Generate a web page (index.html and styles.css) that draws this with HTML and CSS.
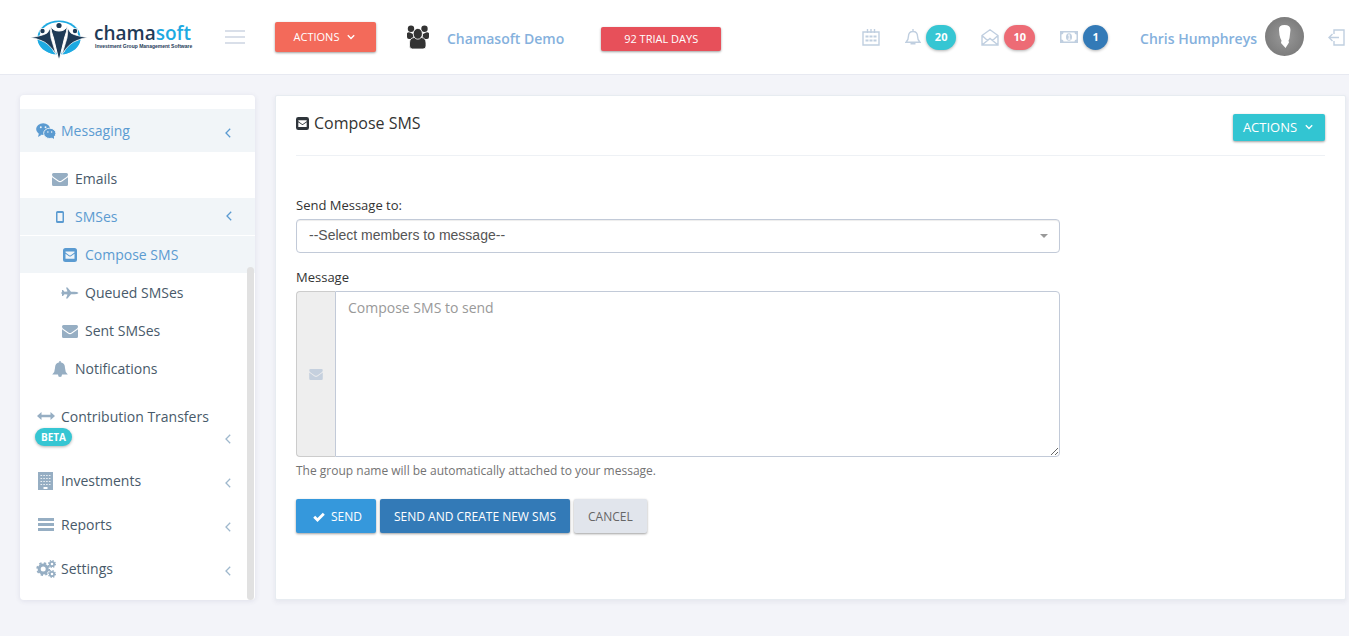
FILE: index.html
```html
<!DOCTYPE html>
<html lang="en">
<head>
<meta charset="utf-8">
<title>Compose SMS</title>
<link rel="stylesheet" href="styles.css">
</head>
<body>
<svg class="defs" aria-hidden="true">
  <symbol id="envelope" viewBox="0 0 16 13"><path d="M1.5 0h13Q16 0 16 1.5 16 3 14.5 4L9.500 7.600Q8 8.600 6.500 7.600L1.500 4Q0 3 0 1.500 0 0 1.500 0z"/><path d="M0 4.200 6 8.600Q8 9.900 10 8.600L16 4.200V11.500Q16 13 14.500 13h-13Q0 13 0 11.500z"/></symbol>
  <symbol id="envelope-square" viewBox="0 0 14 14"><path fill-rule="evenodd" d="M2.500 0h9Q14 0 14 2.500v9q0 2.500-2.500 2.500h-9Q0 14 0 11.500v-9Q0 0 2.500 0zM2.500 3.500v1L6.200 7.300q.8.500 1.600 0L11.500 4.500v-1zM2.500 5.700v5h9v-5L8 8.200q-1 .6-2 0z"/></symbol>
  <symbol id="left" viewBox="0 0 6 10"><path d="M5.200.8 1 5l4.200 4.200" fill="none" stroke="currentColor" stroke-width="1.300"/></symbol>
  <symbol id="down" viewBox="0 0 8 6"><path d="M.8 1.200 4 4.400 7.200 1.200" fill="none" stroke="currentColor" stroke-width="1.400"/></symbol>
  <radialGradient id="disc"><stop offset="0" stop-color="#999"/><stop offset="1" stop-color="#7d7d7d"/></radialGradient>
</svg>

<header class="topbar">
  <a class="logo" href="#" aria-label="Chamasoft home">
    <svg class="logo-mark" viewBox="0 0 58 42" aria-hidden="true">
      <ellipse cx="29" cy="19.500" rx="21.500" ry="17" fill="#1eaae2"/>
      <ellipse cx="29" cy="19.500" rx="19.500" ry="15.300" fill="#fff"/>
      <path d="M7.500 22q2 11 17 14.500L20 25zM50.500 22q-2 11-17 14.500L38 25z" fill="#1eaae2"/>
      <path d="M0 19.500Q9 18.500 14 16.500 18 16 20.500 9.500 20 15 21 20L26 36.500Q19 25 11 22.500 6 20 0 19.500z" fill="#1f3b57" stroke="#fff" stroke-width=".7"/>
      <path d="M58 19.500Q49 18.500 44 16.500 40 16 37.500 9.500 38 15 37 20L32 36.500Q39 25 47 22.500 52 20 58 19.500z" fill="#1f3b57" stroke="#fff" stroke-width=".7"/>
      <path d="M20.500 7Q22 13 29 13T37.500 7Q37 14 34.500 20L29.500 41h-1L23.500 20Q21 14 20.500 7z" fill="#1f3b57" stroke="#fff" stroke-width="1"/>
      <circle cx="29" cy="7.500" r="3.600" fill="#fff"/>
      <circle cx="29" cy="7.500" r="2.600" fill="#1f3b57"/><circle cx="12.500" cy="13" r="3" fill="#fff"/><circle cx="45" cy="13" r="3" fill="#fff"/><circle cx="12.500" cy="13" r="2.200" fill="#1f3b57"/><circle cx="45" cy="13" r="2.200" fill="#1f3b57"/>
    </svg>
    <span class="logo-words"><span class="logo-name">chama<span>soft</span></span><span class="logo-tag">Investment Group Management Software</span></span>
  </a>
  <button class="toggler" type="button" aria-label="Toggle menu"><i></i><i></i><i></i></button>
  <button class="btn btn-coral" type="button">ACTIONS <svg class="caret"><use href="#down"/></svg></button>
  <a class="group" href="#">
    <svg viewBox="0 0 24 24" class="group-icon" aria-hidden="true"><g fill="#333"><circle cx="5" cy="3.800" r="3.200"/><circle cx="18.500" cy="3.800" r="3.200"/><path d="M1 8.200Q2 7 4 7.500L7 9q0 4 2 5H3Q1 14 1 12zM23 8.200Q22 7 20 7.500L17 9q0 4-2 5h6q2 0 2-2z"/><path d="M3.500 21v-3q0-5 4.500-5.500h7.500q4.500.5 4.500 5.500v3q0 3-3 3H6.500q-3 0-3-3z" stroke="#fff" stroke-width=".8"/><ellipse cx="11.800" cy="8.800" rx="4.600" ry="5.400" stroke="#fff" stroke-width=".8"/></g></svg>
    <span>Chamasoft Demo</span>
  </a>
  <a class="btn btn-red" href="#">92 TRIAL DAYS</a>
  <nav class="top-nav" aria-label="Account">
    <a href="#" aria-label="Calendar"><svg class="line" width="18" height="17" viewBox="0 0 18 17"><path d="M1 3h16v13H1zM5.500 0v4M9 0v4M12.500 0v4"/><path d="M3.500 7.500h11M3.500 11.500h11" stroke-width="2" stroke-dasharray="3 1"/></svg></a>
    <a href="#"><svg class="line" width="16" height="16" viewBox="0 0 16 16"><path d="M1 13.300h14Q12.500 11 12.500 7 12.500 2.500 8 2.500T3.500 7Q3.500 11 1 13.300zM8 0v2.500"/><path d="M5.500 14.500h5" stroke-width="2"/></svg><span class="count teal">20</span></a>
    <a href="#"><svg class="line" width="18" height="17" viewBox="0 0 18 17"><path d="M1 6.500 9 .8l8 5.700V16H1zM1 6.500l5.500 5M17 6.500l-5.500 5M1 16l8-6.500L17 16"/></svg><span class="count pink">10</span></a>
    <a href="#"><svg width="18" height="12" viewBox="0 0 18 12" fill="currentColor"><path fill-rule="evenodd" d="M0 0h18v12H0zM3.500 1.500Q3.500 3.500 1.500 3.500v5q2 0 2 2h11q0-2 2-2v-5q-2 0-2-2z"/><ellipse cx="9" cy="6" rx="3" ry="3.800"/><path d="M8 4.500 9.200 3.500v4.500M7.800 8.200h2.700" fill="none" stroke="#fff"/></svg><span class="count blue">1</span></a>
  </nav>
  <a class="user" href="#"><span>Chris Humphreys</span>
    <svg class="avatar" viewBox="0 0 39 39" aria-hidden="true"><circle cx="19.500" cy="19.500" r="19.500" fill="url(#disc)"/><path d="M14 13Q13.500 8 19.500 8T25.500 13L24.500 21q-.5 2-1 2.500l.5 2L20.500 31 16 26 16.500 23.500Q15 21 14.500 18z" fill="#fff"/></svg>
  </a>
  <a class="logout" href="#" aria-label="Log out"><svg class="line" width="17" height="17" viewBox="0 0 17 17"><path d="M6 5V1h10v15H6v-4M1 8.500h10M4.500 5 1 8.500 4.500 12"/></svg></a>
</header>

<div class="page">
  <aside class="sidebar">
    <ul class="menu">
      <li>
        <a class="item active" href="#"><svg class="icon" viewBox="0 0 21 17"><ellipse cx="7.500" cy="6.500" rx="7.500" ry="6.300"/><path d="M3 11l-1 4 4-2.500z"/><ellipse cx="14.500" cy="11" rx="6.500" ry="5.500" stroke="#f1f5f8"/><path d="M16 15l3 2v-3z"/><g fill="#f1f5f8"><circle cx="5" cy="4.500" r="1"/><circle cx="10" cy="4.500" r="1"/><circle cx="12.500" cy="9.500" r=".8"/><circle cx="16.500" cy="9.500" r=".8"/></g></svg>Messaging<svg class="chev"><use href="#left"/></svg></a>
        <ul class="sub">
          <li><a class="item" href="#"><svg class="icon"><use href="#envelope" x="2" y="2" width="16" height="13"/></svg>Emails</a></li>
          <li><a class="item active" href="#"><svg class="icon" viewBox="0 0 20 16"><path fill-rule="evenodd" d="M7.500 2h5Q14 2 14 3.500v9q0 1.500-1.500 1.500h-5Q6 14 6 12.500v-9Q6 2 7.500 2zm0 2v8h5V4z"/></svg>SMSes<svg class="chev"><use href="#left"/></svg></a>
            <ul class="sub-deep">
              <li><a class="item active" href="#"><svg class="icon"><use href="#envelope-square" x="3" y="1" width="14" height="14"/></svg>Compose SMS</a></li>
              <li><a class="item" href="#"><svg class="icon" viewBox="0 0 20 16"><path d="M18.500 8q-1 1.200-4 1.200H11L7.500 13.500H6L7.500 9.600 4.500 9.300 3 11H2V9L1 8l1-1V5h1l1.500 1.700 3-.3L6 2.500h1.500L11 6.800h3.500q3 0 4 1.200z"/></svg>Queued SMSes</a></li>
              <li><a class="item" href="#"><svg class="icon"><use href="#envelope" x="2" y="2" width="16" height="13"/></svg>Sent SMSes</a></li>
            </ul>
          </li>
          <li><a class="item" href="#"><svg class="icon" viewBox="0 0 20 16"><path d="M9.300 0h1.400v1.200Q15 2 15 7q0 4 2.800 6.500H12Q12 16 10 16t-2-2.500H2.200Q5 11 5 7q0-5 4.300-5.800z"/></svg>Notifications</a></li>
        </ul>
      </li>
      <li><a class="item" href="#"><svg class="icon" viewBox="0 0 20 16"><path d="M1 7l4.500-4v2.800h9V3L19 7l-4.500 4V8.200h-9V11z"/></svg>Contribution Transfers<span class="beta">BETA</span><svg class="chev"><use href="#left"/></svg></a></li>
      <li><a class="item" href="#"><svg class="icon tall" viewBox="0 0 20 18"><path d="M2 0h15v18H2z"/><path d="M4.500 3.500h11M4.500 6.500h11M4.500 9.500h11M4.500 12.500h11" stroke="#fff" stroke-width=".8" stroke-dasharray="1.600 1.200"/><path d="M7.500 15h4v2h-4z" fill="#fff"/></svg>Investments<svg class="chev"><use href="#left"/></svg></a></li>
      <li><a class="item" href="#"><svg class="icon" viewBox="0 0 20 16"><path d="M2 1h16v3H2zM2 6h16v3H2zM2 11h16v3H2z"/></svg>Reports<svg class="chev"><use href="#left"/></svg></a></li>
      <li><a class="item" href="#"><svg class="icon tall" viewBox="0 0 20 18" stroke="currentColor"><g fill="none"><circle cx="7.200" cy="9" r="4" stroke-width="3"/><circle cx="7.200" cy="9" r="6" stroke-width="1.800" stroke-dasharray="2.400 2.300"/><circle cx="16" cy="4" r="2.200" stroke-width="1.800"/><circle cx="16" cy="4" r="3.400" stroke-width="1.200" stroke-dasharray="1.400 1.270"/><circle cx="16" cy="14" r="2.200" stroke-width="1.800"/><circle cx="16" cy="14" r="3.400" stroke-width="1.200" stroke-dasharray="1.400 1.270"/></g></svg>Settings<svg class="chev"><use href="#left"/></svg></a></li>
    </ul>
    <div class="thumb"></div>
  </aside>

  <main class="panel">
    <div class="panel-head">
      <h1><svg class="title-icon"><use href="#envelope-square"/></svg>Compose SMS</h1>
      <button class="btn btn-teal" type="button">ACTIONS <svg class="caret"><use href="#down"/></svg></button>
    </div>
    <form class="form">
      <label for="to">Send Message to:</label>
      <div class="select-wrap">
        <select id="to"><option>--Select members to message--</option></select>
        <svg class="arrow" viewBox="0 0 8 4" aria-hidden="true"><path d="M0 0h8L4 4z"/></svg>
      </div>
      <label for="msg">Message</label>
      <div class="input-group">
        <span class="addon"><svg width="14" height="11"><use href="#envelope"/></svg></span>
        <textarea id="msg" placeholder="Compose SMS to send"></textarea>
      </div>
      <p class="help">The group name will be automatically attached to your message.</p>
      <div class="buttons">
        <button class="btn btn-send" type="button"><svg width="12" height="10" viewBox="0 0 12 10" aria-hidden="true"><path d="M1.200 4.800 4.500 8 10.800 1.700" fill="none" stroke="#fff" stroke-width="2.800"/></svg>SEND</button>
        <button class="btn btn-blue" type="button">SEND AND CREATE NEW SMS</button>
        <button class="btn btn-grey" type="button">CANCEL</button>
      </div>
    </form>
  </main>
</div>
</body>
</html>
```
FILE: styles.css
```css
* { box-sizing: border-box; }
body { margin: 0; background: #f3f4f9; color: #333; font: 14px/20px "Open Sans", sans-serif; }
a { color: inherit; text-decoration: none; }
ul { list-style: none; margin: 0; padding: 0; }
svg { flex: none; }
.defs { position: absolute; width: 0; height: 0; }

.btn { display: inline-flex; align-items: center; justify-content: center; border: 0; border-radius: 2px; padding: 0; color: #fff; font: 12px/18px "Open Sans", sans-serif; white-space: nowrap; box-shadow: 0 1px 3px rgba(0,0,0,.2), 0 1px 2px rgba(0,0,0,.2); }
.caret { width: 8px; height: 6px; margin-left: 8px; }

.topbar { display: flex; align-items: center; height: 75px; padding: 0 4px 0 30px; background: #fff; border-bottom: 1px solid #e7e9f1; }
.logo { display: flex; align-items: center; gap: 6px; width: 195px; }
.logo-mark { width: 58px; height: 42px; margin-top: 3px; }
.logo-words { display: flex; flex-direction: column; padding-bottom: 2px; }
.logo-name { color: #1f3b57; font: 600 19px/20px "Open Sans", sans-serif; }
.logo-name span { color: #1eaae2; }
.logo-tag { padding-left: 1px; color: #1f3b57; font: 700 5px/6px "Liberation Sans", sans-serif; white-space: nowrap; }
.toggler { display: flex; flex-direction: column; gap: 4px; width: 20px; padding: 0; border: 0; background: none; }
.toggler i { height: 2px; background: #d9dfe9; }
.btn-coral { width: 101px; height: 30px; margin-left: 30px; padding-right: 2px; background: #f36a5a; font-size: 11px; }
.group, .user { display: flex; align-items: center; color: #85b1dd; font-weight: 600; white-space: nowrap; }
.group { gap: 17px; margin-left: 30px; }
.group span, .user span { padding-top: 3px; }
.group-icon { width: 24px; height: 24px; }
.btn-red { width: 120px; height: 24px; margin: 4px 0 0 37px; background: #e7505a; font-size: 11px; }
.top-nav { display: flex; align-items: center; margin-left: auto; gap: 25px; color: #c0cfe0; }
.top-nav a { display: flex; align-items: center; gap: 5px; }
.line { fill: none; stroke: #c0cfe0; stroke-width: 1.4; }
.count { min-width: 25px; padding: 3px 9px 4px; border-radius: 13px; color: #fff; font: 700 11px/18px "Open Sans", sans-serif; text-align: center; box-shadow: 0 1px 3px rgba(0,0,0,.3); }
.teal { background: #36c6d3; }
.pink { background: #ed6b75; }
.blue { background: #337ab7; }
.user { gap: 8px; margin-left: 32px; }
.avatar { width: 39px; height: 39px; margin-bottom: 2px; }
.logout { display: flex; margin-left: 24px; }

.page { display: flex; align-items: stretch; gap: 20px; padding: 20px 3px 36px 20px; }
.sidebar { position: relative; width: 235px; flex: none; padding: 14px 0 10px; background: #fff; border-radius: 4px; box-shadow: 0 1px 4px 1px rgba(60,70,110,.08); }
.menu, .sub, .sub-deep, .sub > li { display: flex; flex-direction: column; gap: 1px; }
.item { display: flex; flex-wrap: wrap; align-items: center; column-gap: 5px; position: relative; padding: 12px 16px 11px; color: #485a6a; }
.icon { width: 20px; height: 16px; fill: #96aec3; color: #96aec3; }
.tall { height: 18px; }
.sub { padding: 8px 0 7px; }
.sub .item { padding: 9px 16px 8px 30px; }
.sub-deep .item { padding-left: 40px; }
.active { color: #5b9bd1; background: #f1f5f8; }
.active .icon { fill: #5b9bd1; }
.chev { width: 6px; height: 10px; margin: 3px 8px 0 auto; color: #9fb8cd; }
.active .chev { color: #5b9bd1; }
.sub .chev { margin: 0 7px 3px auto; }
.beta { margin: 1px 0 1px -1px; padding: 0 6px; border-radius: 9px; background: #36c6d3; color: #fff; font: 700 10px/18px "Open Sans", sans-serif; box-shadow: 0 1px 3px rgba(0,0,0,.3); }
.thumb { position: absolute; right: 1px; bottom: 0; width: 7px; height: 66%; border-radius: 4px; background: #e1e1e1; }

.panel { flex: 1; min-width: 0; padding: 18px 20px; background: #fff; border: 1px solid #e7ecf1; border-radius: 2px; box-shadow: 0 2px 4px 1px rgba(60,70,110,.06); }
.panel-head { display: flex; align-items: flex-start; justify-content: space-between; padding-bottom: 14px; border-bottom: 1px solid #eef1f5; }
h1 { display: flex; align-items: center; gap: 5px; margin: 0; font: 16px/18px "Open Sans", sans-serif; }
.title-icon { width: 13px; height: 13px; fill: #2f353b; }
.btn-teal { width: 92px; height: 27px; padding: 0 2px 2px 0; background: #32c5d2; font-size: 13px; }
.form { width: calc(75% - 8px); padding-top: 40px; }
.form label { display: block; padding-bottom: 5px; font-size: 13px; line-height: 18px; }
.select-wrap { position: relative; margin-bottom: 15px; }
select { appearance: none; width: 100%; height: 34px; padding: 0 12px 2px; border: 1px solid #c2cad8; border-radius: 4px; background: #fff; color: #555; font: 14px/20px "Liberation Sans", sans-serif; box-shadow: inset 0 1px 1px rgba(0,0,0,.075); }
.arrow { position: absolute; right: 12px; top: 15px; width: 8px; height: 4px; fill: #999; }
.input-group { display: flex; height: 166px; }
.addon { display: flex; align-items: center; justify-content: center; width: 39px; border: 1px solid #ccc; border-right: 0; border-radius: 4px 0 0 4px; background: #eee; fill: #c5d0de; }
textarea { flex: 1; min-width: 0; padding: 6px 12px; border: 1px solid #c2cad8; border-radius: 0 4px 4px 0; font: 14px/20px "Open Sans", sans-serif; }
textarea::placeholder { color: #999; }
.help { margin: 5px 0 19px; color: #737373; font-size: 12px; line-height: 18px; }
.buttons { display: flex; gap: 4px; }
.buttons .btn { height: 34px; padding: 2px 14px 0; }
.buttons .btn-send { gap: 6px; padding: 2px 14px 0 17px; background: #3598dc; }
.buttons .btn-blue { background: #337ab7; }
.buttons .btn-grey { background: #e1e5ec; color: #666; }
```
